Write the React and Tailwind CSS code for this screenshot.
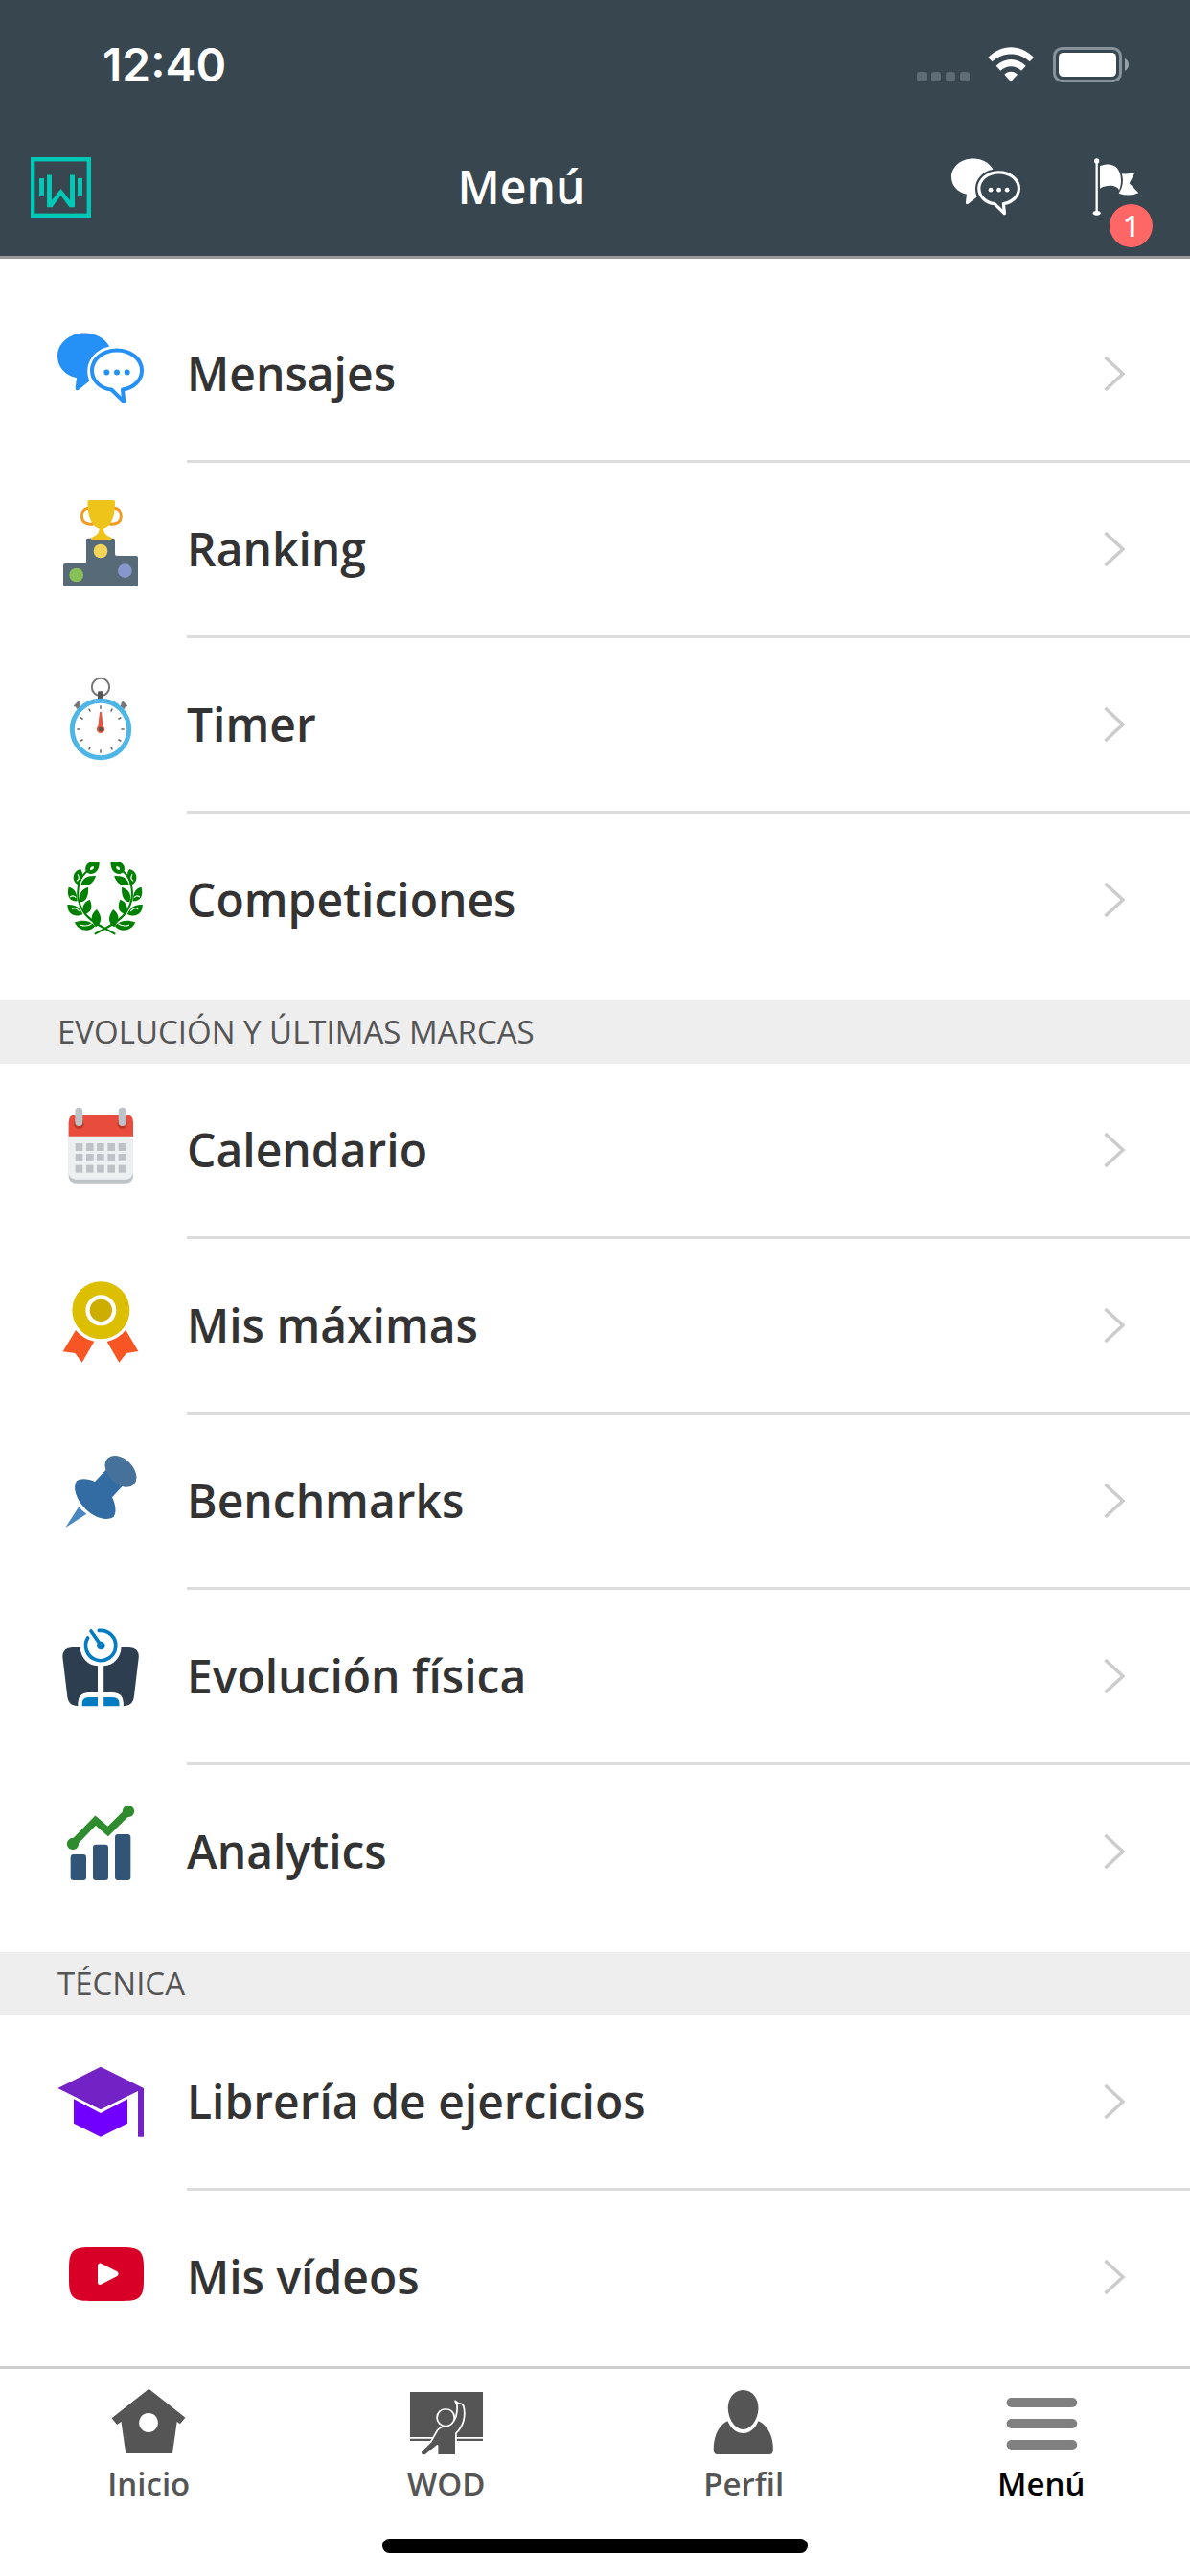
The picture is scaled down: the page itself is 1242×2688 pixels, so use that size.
function ChatIcon({ className }) {
    return (
        <svg viewBox="60 80 270 224" className={className} fill="currentColor">
            <path d="M222 122C208 97 180 81 145 81C98 81 60 113 60 153C60 187 84 214 120 221L116 253Q116 264 126 259L160 231C148 200 154 172 172 152C185 137 203 127 222 124Z" />
            <path d="M246 135C290 135 324 163 324 198C324 228 300 252 264 258L268 296L229 258C195 255 168 230 168 198C168 163 202 135 246 135Z" fill="none" stroke="currentColor" strokeWidth="12" strokeLinejoin="round" />
            <circle cx="214" cy="204" r="9" />
            <circle cx="246" cy="204" r="9" />
            <circle cx="278" cy="204" r="9" />
        </svg>
    )
}

function RankingIcon() {
    return (
        <svg viewBox="60 606 270 270" className="w-[90px] h-[90px]">
            <path fill="#566a78" d="M78 810q0-6 6-6H144q6 0 6-6V731q0-6 6-6H234q6 0 6 6V774q0 6 6 6H306q6 0 6 6V870q0 6-6 6H84q-6 0-6-6Z" />
            <path fill="none" stroke="#f29c1f" strokeWidth="9" d="M160 631C143 631 136 643 136 656C136 676 152 685 174 680M235 631C252 631 259 643 259 656C259 676 243 685 221 680" />
            <path fill="#efc41a" d="M160 606H235Q240 606 240 611C240 655 230 688 204 695C205 708 214 716 222 719Q230 721 230 729H165Q165 721 173 719C182 716 190 708 191 695C165 688 155 655 154 611Q154 606 160 606Z" />
            <circle cx="195" cy="765" r="22" fill="#f3d55b" />
            <circle cx="119" cy="840" r="22" fill="#88c057" />
            <circle cx="271" cy="827" r="22" fill="#8697cb" />
        </svg>
    )
}

const ticks = [0, 30, 60, 90, 120, 150, 180, 210, 240, 270, 300, 330]

function TimerIcon() {
    return (
        <svg viewBox="60 75 270 270" className="w-[90px] h-[90px]">
            <g fill="#777">
                <path d="M110 170L124 155L130 158L131 166L134 174L120 180L118 174Z" />
                <path d="M280 170L266 155L260 158L259 166L256 174L270 180L272 174Z" />
            </g>
            <circle cx="195" cy="111" r="27.5" fill="none" stroke="#777" strokeWidth="6" />
            <rect x="186" y="124" width="18" height="26" rx="4" fill="#555" />
            <circle cx="195" cy="243" r="89" fill="#fff" stroke="#4db6e6" strokeWidth="15" />
            {ticks.map((t) => (
                <path key={t} d="M195 169V179" stroke="#555" strokeWidth="4" transform={`rotate(${t} 195 243)`} />
            ))}
            <path d="M192 190Q195 187 198 190L203 233A12.5 12.5 0 1 1 187 233Z" fill="#e3583f" />
            <circle cx="195" cy="243" r="7" fill="#555" />
        </svg>
    )
}

function LaurelHalf() {
    return (
        <>
            <path fill="none" stroke="#008000" strokeWidth="6" strokeLinecap="round" d="M239 883C215 868 165 850 142 815C122 785 119 750 131 715C138 700 147 692 156 684" />
            <path fillRule="evenodd" d="M191 658C192 682 180 697 163 696C149 694 144 682 150 670C157 656 172 656 191 658ZM174 674C168 671 161 676 162 684C169 685 175 680 174 674Z" />
            <path d="M132 681C114 684 105 704 113 719C118 728 125 730 130 731L133 718C143 700 137 688 132 681Z" />
            <path d="M180 702C172 727 155 736 133 731C139 710 150 701 180 702Z" />
            <path d="M95 737C112 741 121 752 122 781C100 783 87 765 95 737Z" />
            <path d="M156 737C158 765 150 782 132 784C125 765 130 745 156 737Z" />
            <path d="M91 792C115 790 130 800 139 822C115 834 91 822 91 792Z" />
            <path d="M161 776C172 800 165 816 147 821C132 805 140 785 161 776Z" />
            <path d="M114 847C140 838 160 842 178 858C165 880 125 877 114 847Z" />
            <path d="M183 807C202 832 198 850 180 862C160 840 165 820 183 807Z" />
            <path fill="none" stroke="#fff" strokeWidth="3.5" strokeLinecap="round" d="M124 698C129 707 126 714 121 717M101 767C107 763 112 764 117 769M106 806C113 800 122 805 128 812M134 856C148 860 158 858 166 852" />
        </>
    )
}

function LaurelIcon() {
    return (
        <svg viewBox="60 624 270 270" className="w-[90px] h-[90px]" fill="#008000">
            <LaurelHalf />
            <g transform="translate(417.5 0) scale(-1 1)"><LaurelHalf /></g>
        </svg>
    )
}

function CalendarIcon() {
    return (
        <svg viewBox="180 387 270 270" className="w-[90px] h-[90px]">
            <rect x="215" y="450" width="202" height="194" rx="22" fill="#bdc3c7" />
            <rect x="215" y="440" width="202" height="192" rx="22" fill="#ecf0f1" />
            <path d="M215 497V452Q215 430 237 430H395Q417 430 417 452V497Z" fill="#e84c3d" />
            {[247, 383].map((x) => (
                <g key={x}>
                    <circle cx={x} cy="458" r="16" fill="#c03a2b" />
                    <rect x={x - 12} y="407" width="24" height="58" rx="12" fill="#bdc3c7" />
                </g>
            ))}
            {[519, 552, 587].map((y) =>
                [236, 270, 303, 337, 371].map((x) => (
                    <rect key={x + '-' + y} x={x} y={y} width="23" height="24" fill="#bdc3c7" />
                ))
            )}
        </svg>
    )
}

function MedalIcon() {
    return (
        <svg viewBox="60 66 270 270" className="w-[90px] h-[90px]">
            <path fill="#f75523" d="M117 234Q140 262 175 269L137 335L115 306L77 301ZM274 234L313 300L276 306L253 335L215 270Q250 262 274 234Z" />
            <circle cx="196" cy="172" r="90" fill="#ddbf02" />
            <circle cx="196" cy="172" r="41.5" fill="#cdae00" stroke="#fff" strokeWidth="13" />
        </svg>
    )
}

function PinIcon() {
    return (
        <svg viewBox="60 615 270 270" className="w-[90px] h-[90px]">
            <path fill="#4987c2" d="M85 852L127 786Q136 800 151 809Z" />
            <path fill="#326ca2" d="M177 708L214 669L266 719L231 757C243 782 245 805 236 818C215 832 180 824 150 796C118 766 106 725 120 706C132 697 155 698 177 708Z" />
            <ellipse cx="258" cy="676" rx="58" ry="38.5" fill="#46719a" transform="rotate(45 258 676)" />
        </svg>
    )
}

function ScaleIcon() {
    const half = (
        <>
            <path fill="#2d3e50" d="M106 717H131C132 749 156 774 186 775V858H155Q125 860 124 890V901Q94 899 91 872L76 746Q76 718 106 717Z" />
            <path fill="#017bc2" d="M137 901V893Q137 873 157 873H186V901Z" />
        </>
    )
    return (
        <svg viewBox="60 654 270 270" className="w-[90px] h-[90px]">
            {half}
            <g transform="translate(390.5 0) scale(-1 1)">{half}</g>
            <g fill="none" stroke="#017bc2" strokeWidth="11" strokeLinecap="round">
                <path d="M190 664.3A47 47 0 1 1 155 687" />
                <path d="M165 666L193 706" />
            </g>
            <circle cx="196" cy="711" r="13" fill="#017bc2" />
        </svg>
    )
}

function AnalyticsIcon() {
    return (
        <svg viewBox="60 63 270 270" className="w-[90px] h-[90px]">
            <g fill="#325577">
                <rect x="101" y="225" width="49" height="81" rx="9" />
                <rect x="171" y="194" width="48" height="112" rx="9" />
                <rect x="240" y="162" width="49" height="144" rx="9" />
            </g>
            <path d="M108 192L179 119L218 153L282 90" fill="none" stroke="#2e8b2e" strokeWidth="23" />
            <circle cx="108" cy="192" r="18.5" fill="#2e8b2e" />
            <circle cx="282" cy="90" r="18.5" fill="#2e8b2e" />
        </svg>
    )
}

function CapIcon() {
    return (
        <svg viewBox="60 66 270 270" className="w-[90px] h-[90px]">
            <path fill="#7322c6" d="M61 177L195 110L330 177V329H312V186L195 244Z" />
            <path fill="#7200ff" d="M111 211L195 255L279 211V287L195 329L111 287Z" />
        </svg>
    )
}

function VideoIcon() {
    return (
        <svg viewBox="60 615 270 270" className="w-[90px] h-[90px]">
            <path fill="#d80027" d="M96 740C96 688 108 675 160 675H266C318 675 330 688 330 740V778C330 830 318 843 266 843H160C108 843 96 830 96 778Z" />
            <path fill="#fff" d="M186 732Q187 722 196 725L247 751Q255 758 247 765L196 791Q187 794 186 785Z" />
        </svg>
    )
}

function Row({ icon, label, last }) {
    return (
        <div className="flex h-[183px] pl-[60px]">
            <div className="w-[90px] pt-[39px] shrink-0">{icon}</div>
            <div className={last ? 'flex flex-1 items-center justify-between ml-[45px] pr-[67px] border-b-[3px] border-transparent' : 'flex flex-1 items-center justify-between ml-[45px] pr-[67px] border-b-[3px] border-[#dcdcdc]'}>
                <span className="text-[48px] leading-[65px] mb-[2px] font-semibold text-[#333]">{label}</span>
                <svg viewBox="0 0 24 38" className="w-[24px] h-[38px]" fill="none" stroke="#cccccc" strokeWidth="3.5">
                    <path d="M2.5 2L21 19L2.5 36" />
                </svg>
            </div>
        </div>
    )
}

function Section({ title }) {
    return (
        <div className="h-[66px] mt-[12px] pl-[60px] flex items-center bg-[#eeeeee] text-[33px] text-[#555]">
            {title}
        </div>
    )
}

function Tab({ label, viewBox, active, children }) {
    return (
        <div className="flex flex-1 flex-col items-center pt-[20px]">
            <svg viewBox={viewBox} preserveAspectRatio="none" className="w-[80px] h-[72px]" fill="#555">
                {children}
            </svg>
            <span className={active ? 'text-[33px] leading-[45px] mt-[5px] font-semibold text-black' : 'text-[33px] leading-[45px] mt-[5px] font-semibold text-[#555]'}>{label}</span>
        </div>
    )
}

function App() {
    return (
        <div className="w-[1242px] h-[2688px] flex flex-col bg-white overflow-hidden font-['Open_Sans',sans-serif]">
            <header className="h-[270px] bg-[#384650] border-b-[3px] border-[#9b979a] text-white">
                <div className="h-[132px] flex items-start justify-between pl-[107px] pr-[64px] pt-[39px]">
                    <span className="font-['Inter',sans-serif] text-[48px] leading-[58px] font-semibold">12:40</span>
                    <div className="flex items-start pt-[10px]">
                        <div className="flex gap-[5px] pt-[26px]">
                            <i className="w-[10px] h-[10px] rounded-[3px] bg-[#606c74]" />
                            <i className="w-[10px] h-[10px] rounded-[3px] bg-[#606c74]" />
                            <i className="w-[10px] h-[10px] rounded-[3px] bg-[#606c74]" />
                            <i className="w-[10px] h-[10px] rounded-[3px] bg-[#606c74]" />
                        </div>
                        <svg viewBox="394 147 144 111" className="w-[48px] h-[37px] ml-[19px]" fill="#fff">
                            <path d="M395 180C436 137 497 137 538 180L525 193C492 162 441 162 408 193Z" />
                            <path d="M420 206C447 179 486 179 513 206L499 221C481 203 452 203 434 221Z" />
                            <path d="M446 233C457 221 476 221 487 233L466 256Z" />
                        </svg>
                        <svg viewBox="597 147 237 111" className="w-[79px] h-[37px] ml-[20px]">
                            <rect x="601.5" y="151.5" width="207" height="102" rx="24" fill="none" stroke="#87929a" strokeWidth="9" />
                            <rect x="615" y="165" width="180" height="75" rx="14" fill="#fff" />
                            <path d="M822 182Q834 190 834 202Q834 215 822 222Z" fill="#9aa1a6" />
                        </svg>
                    </div>
                </div>
                <nav className="h-[126px] flex items-center pl-[32px] pr-[53px]">
                    <svg viewBox="0 0 63 63" className="w-[63px] h-[63px]" fill="#00c8b7">
                        <rect x="2.2" y="2.2" width="58.6" height="58.6" fill="none" stroke="#00c8b7" strokeWidth="4.4" />
                        <rect x="9" y="22" width="5" height="19" />
                        <rect x="49" y="22" width="5" height="19" />
                        <path d="M17 18.5H22V45L31.5 33L41 45V18.5H46V52.3H40.5L31.5 40L22.5 52.3H17Z" />
                    </svg>
                    <h1 className="flex-1 text-[48px] font-semibold text-center">Menú</h1>
                    <ChatIcon className="w-[72px] h-[60px]" />
                    <div className="relative ml-[75px]">
                        <svg viewBox="720 496 147 180" className="block w-[49px] h-[60px]" fill="#fff">
                            <path d="M734 505V668" stroke="#fff" strokeWidth="7" />
                            <circle cx="734" cy="505" r="8" />
                            <ellipse cx="734" cy="668" rx="12" ry="7" />
                            <path d="M744 521C765 512 785 515 797 526C812 545 814 575 804 597C800 583 770 576 744 591Z" />
                            <path d="M813 545Q835 547 854 540L836 575L865 605Q835 618 803 606Q822 580 813 545Z" />
                        </svg>
                        <span className="absolute left-[18px] top-[48px] w-[45px] h-[45px] rounded-full bg-[#ff6666] text-[30px] leading-[45px] text-center font-semibold">1</span>
                    </div>
                </nav>
            </header>

            <main className="h-[2199px] pt-[30px] shrink-0">
                <Row icon={<ChatIcon className="w-[90px] h-[75px] mt-[8px] text-[#2590f6]" />} label="Mensajes" />
                <Row icon={<RankingIcon />} label="Ranking" />
                <Row icon={<TimerIcon />} label="Timer" />
                <Row icon={<LaurelIcon />} label="Competiciones" last />
                <Section title="EVOLUCIÓN Y ÚLTIMAS MARCAS" />
                <Row icon={<CalendarIcon />} label="Calendario" />
                <Row icon={<MedalIcon />} label="Mis máximas" />
                <Row icon={<PinIcon />} label="Benchmarks" />
                <Row icon={<ScaleIcon />} label="Evolución física" />
                <Row icon={<AnalyticsIcon />} label="Analytics" last />
                <Section title="TÉCNICA" />
                <Row icon={<CapIcon />} label="Librería de ejercicios" />
                <Row icon={<VideoIcon />} label="Mis vídeos" last />
            </main>

            <footer className="h-[219px] border-t-[3px] border-[#cccccc] flex flex-col items-center">
                <div className="flex w-full h-[177px] shrink-0">
                    <Tab label="Inicio" viewBox="290 156 202 216">
                        <path fillRule="evenodd" d="M392 158L488 248L474 268L466 261L454 360H331L319 261L308 270L294 250ZM391 234A25 30 0 1 0 391.1 234Z" />
                    </Tab>
                    <Tab label="WOD" viewBox="1076 156 202 216">
                        <path d="M1081 168H1273V309H1081ZM1081 314H1273V321H1081Z" />
                        <path stroke="#fff" strokeWidth="4.5" strokeLinejoin="round" d="M1109 355L1136 323L1153 288Q1158 279 1172 275Q1195 270 1202 245Q1206 225 1205 211L1200 196L1208 203Q1219 202 1222 212Q1227 235 1222 258Q1217 280 1202 297V365H1153V335L1121 366Q1108 368 1109 355Z" />
                        <ellipse cx="1175" cy="248" rx="23" ry="27" stroke="#fff" strokeWidth="4.5" />
                    </Tab>
                    <Tab label="Perfil" viewBox="291 156 202 216">
                        <path d="M391 162C415 162 431 188 431 217C431 252 413 285 391 285C369 285 351 252 351 217C351 188 367 162 391 162Z" />
                        <path d="M313 348C313 300 330 270 350 259C360 285 375 297 391 297C407 297 422 285 431 259C452 270 470 300 470 348Q470 363 460 363H323Q313 363 313 348Z" />
                    </Tab>
                    <Tab label="Menú" viewBox="1075 156 202 216" active>
                        <g fill="#808080">
                            <rect x="1084" y="186" width="186" height="30" rx="13" ry="15" />
                            <rect x="1084" y="252" width="186" height="30" rx="13" ry="15" />
                            <rect x="1084" y="318" width="186" height="30" rx="13" ry="15" />
                        </g>
                    </Tab>
                </div>
                <div className="w-[444px] h-[15px] rounded-full bg-black shrink-0" />
            </footer>
        </div>
    )
}

export default App;
